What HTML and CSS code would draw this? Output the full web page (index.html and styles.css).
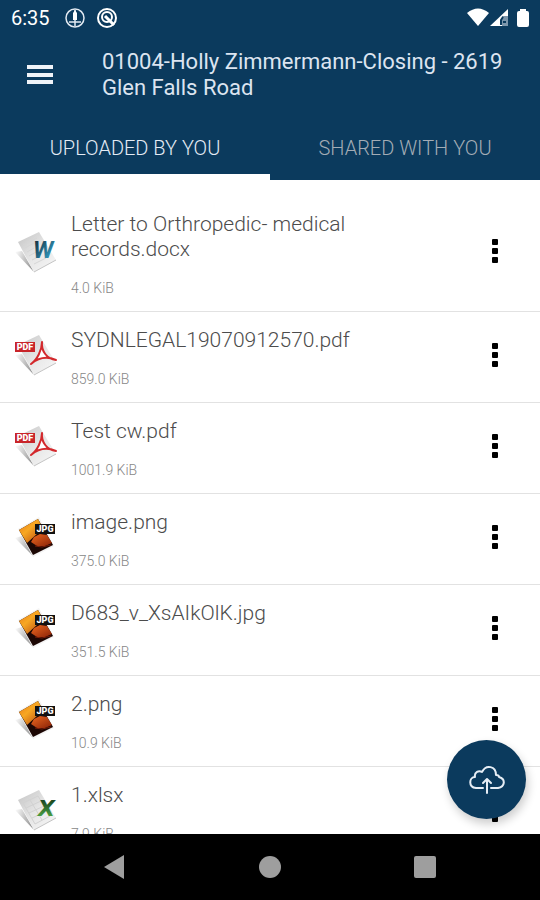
FILE: index.html
```html
<!DOCTYPE html>
<html lang="en">
<head>
    <meta charset="UTF-8">
    <meta name="viewport" content="width=device-width, initial-scale=1.0">
    <title>Documents</title>
    <link rel="stylesheet" href="styles.css">
</head>
<body>
    <!-- gradients for the file icons -->
    <svg class="gradients" aria-hidden="true">
        <defs>
            <linearGradient id="paper-fill" x1="0" y1="0" x2="1" y2="1">
                <stop offset="0" stop-color="#c4c4c4"/>
                <stop offset="0.5" stop-color="#e6e6e6"/>
                <stop offset="1" stop-color="#f8f8f8"/>
            </linearGradient>
            <linearGradient id="shadow-fill" x1="0" y1="0" x2="1" y2="0.4">
                <stop offset="0" stop-color="#fff"/>
                <stop offset="1" stop-color="#989898"/>
            </linearGradient>
            <linearGradient id="word-fill" x1="0" y1="0" x2="1" y2="1">
                <stop offset="0.1" stop-color="#122c3c"/>
                <stop offset="0.7" stop-color="#2e8db0"/>
                <stop offset="1" stop-color="#1b5570"/>
            </linearGradient>
            <linearGradient id="excel-fill" x1="0" y1="0" x2="0" y2="1">
                <stop offset="0.2" stop-color="#1d4a22"/>
                <stop offset="1" stop-color="#55b84a"/>
            </linearGradient>
            <linearGradient id="sky-fill" x1="0" y1="0" x2="1" y2="1">
                <stop offset="0" stop-color="#e8761a"/>
                <stop offset="0.4" stop-color="#f7a823"/>
                <stop offset="1" stop-color="#b03a0c"/>
            </linearGradient>
            <linearGradient id="rock-fill" x1="0" y1="0" x2="1" y2="1">
                <stop offset="0" stop-color="#ee6a20"/>
                <stop offset="1" stop-color="#8a2208"/>
            </linearGradient>
        </defs>
    </svg>
    <!-- shared icons -->
    <svg class="sprite" aria-hidden="true">
        <symbol id="paper" viewBox="0 0 44 44">
            <path d="M1 22 L8 21 L20 42 Z" fill="url(#shadow-fill)"/>
            <path d="M4 12 L25 2 L42 30 L20 42 Z" fill="url(#paper-fill)"/>
            <path d="M20 42 L42 30" stroke="#c4c4c4" stroke-width="1"/>
        </symbol>
        <symbol id="doc" viewBox="0 0 44 44">
            <use href="#paper"/>
            <path d="M9 15 L23 8 M11 18 L20 13 M13 22 L20 18 M15 26 L22 22 M18 30 L26 26 M20 34 L32 28" stroke="#d6d6d6" stroke-width="1"/>
            <text class="letter word" x="19" y="28" font-size="24" fill="url(#word-fill)">W</text>
        </symbol>
        <symbol id="xls" viewBox="0 0 44 44">
            <use href="#paper"/>
            <path d="M9 15 L24 8 L36 28 L21 36 Z M12 20 L27 13 M15 25 L30 18 M18 30 L33 23 M16 12 L28 32" stroke="#d2d2d2" stroke-width="1" fill="none"/>
            <text class="letter" x="24" y="28" font-size="22" fill="url(#excel-fill)">X</text>
        </symbol>
        <symbol id="pdf" viewBox="0 0 44 44">
            <use href="#paper"/>
            <path d="M17 31 C23 27 28 17 28 9 C27 18 33 26 42 27 C33 23 24 25 17 31 Z" fill="#fff" stroke="#d3282c" stroke-width="2" stroke-linejoin="round"/>
            <rect x="1" y="9" width="20" height="10" fill="#c9252a"/>
            <text class="badge" x="11" y="17" font-size="9">PDF</text>
        </symbol>
        <symbol id="jpg" viewBox="0 0 44 44">
            <path d="M1 23 L8 21 L20 42 Z" fill="url(#shadow-fill)"/>
            <path d="M4 14 L25 2 L40 31 L19 42 Z" fill="#f4f4f4"/>
            <path d="M5 15 L24 4 L39 30 L19 40 Z" fill="#1c0704"/>
            <path d="M5 15 L24 4 L31 17 L24 18 L13 28 Z" fill="url(#sky-fill)"/>
            <path d="M17 27 L20 22 L26 19 L33 20 L38 28 L31 31 L23 31 Z" fill="url(#rock-fill)"/>
            <path d="M21 31 L28 32 L37 30" stroke="#7a1c08" stroke-width="1" fill="none"/>
            <rect x="21" y="9" width="20" height="10" fill="#111"/>
            <text class="badge" x="31" y="17" font-size="9">JPG</text>
        </symbol>
        <symbol id="dots" viewBox="0 0 8 24">
            <rect x="1" y="0" width="6" height="6" rx="1"/>
            <rect x="1" y="9" width="6" height="6" rx="1"/>
            <rect x="1" y="18" width="6" height="6" rx="1"/>
        </symbol>
    </svg>

    <header>
        <div class="status-bar">
            <span class="time">6:35</span>
            <svg class="status-icon" viewBox="0 0 22 22" fill="none" stroke="#e3eaf2" stroke-width="1.5">
                <circle cx="11" cy="11" r="9"/>
                <path d="M11 3 V19 M5 15 H17"/>
                <path d="M9 13 V6 L11 3 L13 6 V13 Z" fill="#fff" stroke="none"/>
            </svg>
            <svg class="status-icon" viewBox="0 0 22 22" fill="none" stroke="#fff" stroke-width="2">
                <circle cx="11" cy="11" r="9"/>
                <circle cx="11" cy="10" r="5"/>
                <path d="M9 9 L18 18" stroke-width="3"/>
            </svg>
            <svg class="system-icons" viewBox="0 0 64 20" fill="#fff">
                <path d="M0 5 Q11 -4 22 5 L11 18 Z"/>
                <path d="M23 18 L41 1 V18 Z"/>
                <path d="M35 8 H41 V18 H35 Z" fill="#7d96ab"/>
                <path d="M34 17 V12 L36 9 M36 14 H39" stroke="#0b3a5d" stroke-width="2" fill="none"/>
                <path d="M53 1 H59 V3 H60 Q62 3 62 5 V17 Q62 19 60 19 H52 Q50 19 50 17 V5 Q50 3 52 3 H53 Z"/>
            </svg>
        </div>
        <div class="toolbar">
            <button class="menu" aria-label="Menu">
                <svg viewBox="0 0 26 20" fill="#f0f3f8">
                    <rect y="0" width="26" height="4"/>
                    <rect y="8" width="26" height="4"/>
                    <rect y="15" width="26" height="4"/>
                </svg>
            </button>
            <h1>01004-Holly Zimmermann-Closing - 2619 Glen Falls Road</h1>
        </div>
        <div class="tabs" role="tablist">
            <button class="tab active" role="tab" aria-selected="true">UPLOADED BY YOU</button>
            <button class="tab" role="tab" aria-selected="false">SHARED WITH YOU</button>
        </div>
    </header>

    <main>
        <ul class="files">
            <li>
                <svg class="file-icon"><use href="#doc"/></svg>
                <div class="details">
                    <span class="name">Letter to Orthropedic- medical records.docx</span>
                    <span class="size">4.0 KiB</span>
                </div>
                <button class="more" aria-label="More"><svg><use href="#dots"/></svg></button>
            </li>
            <li>
                <svg class="file-icon"><use href="#pdf"/></svg>
                <div class="details">
                    <span class="name">SYDNLEGAL19070912570.pdf</span>
                    <span class="size">859.0 KiB</span>
                </div>
                <button class="more" aria-label="More"><svg><use href="#dots"/></svg></button>
            </li>
            <li>
                <svg class="file-icon"><use href="#pdf"/></svg>
                <div class="details">
                    <span class="name">Test cw.pdf</span>
                    <span class="size">1001.9 KiB</span>
                </div>
                <button class="more" aria-label="More"><svg><use href="#dots"/></svg></button>
            </li>
            <li>
                <svg class="file-icon"><use href="#jpg"/></svg>
                <div class="details">
                    <span class="name">image.png</span>
                    <span class="size">375.0 KiB</span>
                </div>
                <button class="more" aria-label="More"><svg><use href="#dots"/></svg></button>
            </li>
            <li>
                <svg class="file-icon"><use href="#jpg"/></svg>
                <div class="details">
                    <span class="name">D683_v_XsAIkOlK.jpg</span>
                    <span class="size">351.5 KiB</span>
                </div>
                <button class="more" aria-label="More"><svg><use href="#dots"/></svg></button>
            </li>
            <li>
                <svg class="file-icon"><use href="#jpg"/></svg>
                <div class="details">
                    <span class="name">2.png</span>
                    <span class="size">10.9 KiB</span>
                </div>
                <button class="more" aria-label="More"><svg><use href="#dots"/></svg></button>
            </li>
            <li>
                <svg class="file-icon"><use href="#xls"/></svg>
                <div class="details">
                    <span class="name">1.xlsx</span>
                    <span class="size">7.9 KiB</span>
                </div>
                <button class="more" aria-label="More"><svg><use href="#dots"/></svg></button>
            </li>
        </ul>
        <button class="upload" aria-label="Upload">
            <svg viewBox="0 0 36 30" fill="none" stroke="#e6edf5" stroke-width="2" stroke-linecap="round" stroke-linejoin="round">
                <path d="M14 23 H7 C-1 22 0 12 6 12 C5 7 10 5 13 7 C17 -1 27 1 27 10 C29 10 30 11 30 12 C37 14 36 22 29 23 H22"/>
                <path d="M18 28 V14 M14 18 L18 14 L22 18"/>
            </svg>
        </button>
    </main>

    <nav class="nav-bar">
        <button aria-label="Back"><svg viewBox="0 0 24 24"><path d="M1 12 L21 0 V24 Z"/></svg></button>
        <button aria-label="Home"><svg viewBox="0 0 24 24"><circle cx="12" cy="12" r="11"/></svg></button>
        <button aria-label="Recent apps"><svg viewBox="0 0 24 24"><rect x="1" y="1" width="22" height="22" rx="2"/></svg></button>
    </nav>
</body>
</html>
```
FILE: styles.css
```css
* {
    box-sizing: border-box;
}

body {
    margin: 0;
    height: 100vh;
    display: flex;
    flex-direction: column;
    background-color: #fff;
    font-family: Roboto, "Liberation Sans", sans-serif;
}

button {
    border: none;
    padding: 0;
    background: none;
    font-family: inherit;
    cursor: pointer;
}

svg {
    display: block;
}

.gradients {
    position: absolute;
    width: 0;
    height: 0;
}

.sprite {
    display: none;
}

header {
    background-color: #0b3a5d;
    color: #dce4f0;
}

/* status bar */
.status-bar {
    display: flex;
    align-items: center;
    height: 36px;
    padding: 0 11px;
    gap: 10px;
}

.time {
    color: #fff;
    font-size: 20px;
    margin-right: 4px;
}

.status-icon {
    width: 22px;
    height: 22px;
}

.system-icons {
    width: 64px;
    height: 20px;
    margin-left: auto;
    margin-right: -2px;
}

/* toolbar */
.toolbar {
    display: flex;
    align-items: center;
    gap: 49px;
    padding: 13px 27px 21px;
}

.menu svg {
    width: 26px;
    height: 20px;
}

h1 {
    margin: 0;
    font-size: 22px;
    font-weight: 400;
    line-height: 26px;
}

/* tabs */
.tabs {
    display: flex;
}

.tab {
    flex: 1;
    height: 58px;
    border-bottom: 6px solid #0b3a5d;
    color: #a3acb5;
    font-size: 20px;
    font-weight: 300;
}

.tab.active {
    border-color: #fff;
    color: #e4ebf5;
}

/* files */
main {
    flex: 1;
    min-height: 0;
    position: relative;
}

.files {
    height: 100%;
    margin: 0;
    padding: 16px 0 0;
    overflow-y: auto;
    scrollbar-width: none;
    list-style-type: none;
}

.files li {
    display: flex;
    align-items: center;
    padding: 0 35px 0 14px;
    border-bottom: 1px solid #e2e2e2;
}

.file-icon {
    flex: none;
    width: 44px;
    height: 44px;
    margin: 0 13px 4px 0;
}

.letter {
    font-family: "DejaVu Sans", sans-serif;
    font-weight: bold;
    font-style: italic;
}

.letter.word {
    font-family: Roboto, sans-serif;
}

.badge {
    fill: #fff;
    font-family: Roboto, sans-serif;
    font-weight: 900;
    text-anchor: middle;
}

.details {
    flex: 1;
    display: flex;
    flex-direction: column;
    gap: 16px;
    padding: 16px 60px 13px 0;
}

.name {
    color: #4c4c4c;
    font-size: 21px;
    font-weight: 300;
    line-height: 25px;
}

.size {
    color: #888;
    font-size: 14px;
    font-weight: 300;
    line-height: 20px;
}

.more svg {
    width: 20px;
    height: 24px;
    margin-bottom: 5px;
}

.upload {
    position: absolute;
    right: 14px;
    bottom: 15px;
    display: flex;
    align-items: center;
    justify-content: center;
    width: 79px;
    height: 79px;
    border-radius: 50%;
    background-color: #0b3a5d;
    box-shadow: 2px 5px 10px rgba(0, 0, 0, 0.2);
}

.upload svg {
    width: 36px;
    height: 30px;
}

/* android navigation */
.nav-bar {
    display: flex;
    height: 66px;
    padding: 0 37px;
    background-color: #000;
}

.nav-bar button {
    flex: 1;
    display: flex;
    align-items: center;
    justify-content: center;
}

.nav-bar svg {
    width: 24px;
    height: 24px;
    fill: #9e9e9e;
}
```
